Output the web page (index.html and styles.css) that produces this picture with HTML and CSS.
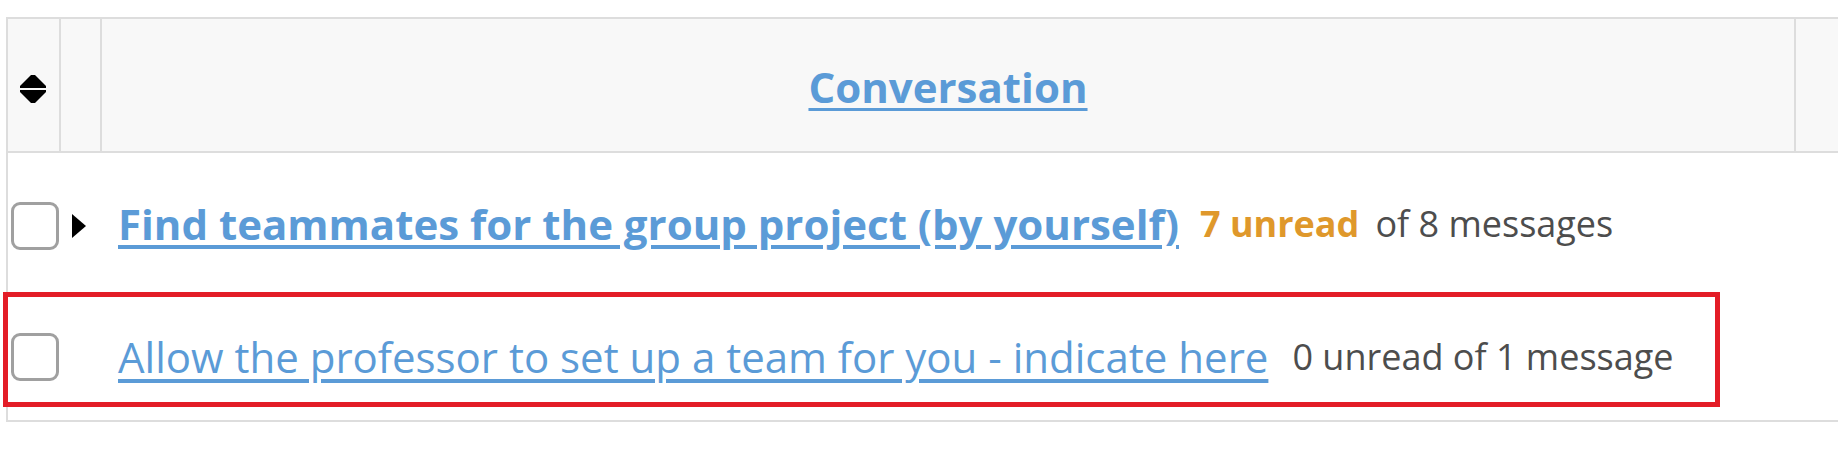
FILE: index.html
```html
<!DOCTYPE html>
<html>
<head>
<meta charset="utf-8">
<link rel="stylesheet" href="styles.css">
</head>
<body>
<div class="page">
  <div class="table">
    <div class="thead">
      <div class="th th-sort">
        <svg class="sort-icon" width="26" height="28" viewBox="0 0 26 28">
          <polygon points="11,0 15,0 26,11 26,13 0,13 0,11" fill="#000"/>
          <polygon points="0,15 26,15 26,17 15,28 11,28 0,17" fill="#000"/>
        </svg>
      </div>
      <div class="th th-toggle"></div>
      <div class="th th-main"><a href="#" class="col-link">Conversation</a></div>
      <div class="th th-extra"></div>
    </div>
    <div class="tbody">
      <div class="row row-first">
        <span class="checkbox"></span>
        <span class="toggle">
          <svg width="14" height="24" viewBox="0 0 14 24"><polygon points="0,0 14,12 0,24" fill="#000"/></svg>
        </span>
        <a href="#" class="topic topic-unread">Find teammates for the group project (by yourself)</a>
        <span class="unread">7 unread</span>
        <span class="count">of 8 messages</span>
      </div>
      <div class="row row-second">
        <span class="checkbox"></span>
        <span class="toggle"></span>
        <a href="#" class="topic">Allow the professor to set up a team for you - indicate here</a>
        <span class="count count-read">0 unread of 1 message</span>
        <div class="highlight"></div>
      </div>
    </div>
  </div>
</div>
</body>
</html>
```

FILE: styles.css
```css
html, body {
  margin: 0;
  padding: 0;
  background: #ffffff;
  overflow: hidden;
}

body {
  width: 1838px;
  height: 473px;
  font-family: "Open Sans", "Liberation Sans", sans-serif;
  color: #4d4d4d;
}

.page {
  padding: 17px 0 0 6px;
}

.table {
  width: 1900px;
  border: 2px solid #dddddd;
  border-right: none;
}

.thead {
  display: grid;
  grid-template-columns: 51px 39px 1692px 1fr;
  column-gap: 2px;
  background: #dddddd;
  border-bottom: 2px solid #dddddd;
  height: 132px;
}

.th {
  background: #f8f8f8;
  display: flex;
  align-items: center;
}

.th-sort {
  justify-content: flex-start;
  padding-left: 12px;
  padding-top: 8px;
}

.th-main {
  justify-content: center;
  padding-top: 2px;
}

.col-link {
  font-size: 42px;
  font-weight: 700;
  color: #5b9bd7;
  text-decoration: underline;
  text-decoration-thickness: 3px;
  text-underline-offset: 5px;
}

.tbody {
  display: flex;
  flex-direction: column;
}

.row {
  display: flex;
  align-items: center;
  padding-left: 3px;
  white-space: nowrap;
}

.row-first {
  height: 140px;
}

.row-second {
  height: 127px;
  position: relative;
}

.checkbox {
  box-sizing: border-box;
  width: 48px;
  height: 48px;
  border: 3px solid #a0a0a0;
  border-radius: 9px;
  background: #fff;
  flex: none;
}

.row-first .checkbox {
  margin-top: 6px;
}

.toggle {
  width: 14px;
  height: 24px;
  margin-left: 13px;
  margin-right: 32px;
  flex: none;
  display: flex;
  margin-top: 6px;
}

.topic {
  font-size: 42px;
  color: #5b9bd7;
  text-decoration: underline;
  text-decoration-thickness: 4px;
  text-underline-offset: 6px;
}

.topic-unread {
  font-weight: 700;
  text-underline-offset: 5px;
}

.unread {
  font-size: 36px;
  font-weight: 700;
  color: #df982b;
  margin-left: 21px;
}

.count {
  font-size: 36px;
  color: #4d4d4d;
  margin-left: 16px;
}

.count-read {
  margin-left: 24px;
}

.highlight {
  position: absolute;
  left: -5px;
  top: -1px;
  width: 1717px;
  height: 115px;
  box-sizing: border-box;
  border: 5px solid #e31d27;
  pointer-events: none;
}
```
